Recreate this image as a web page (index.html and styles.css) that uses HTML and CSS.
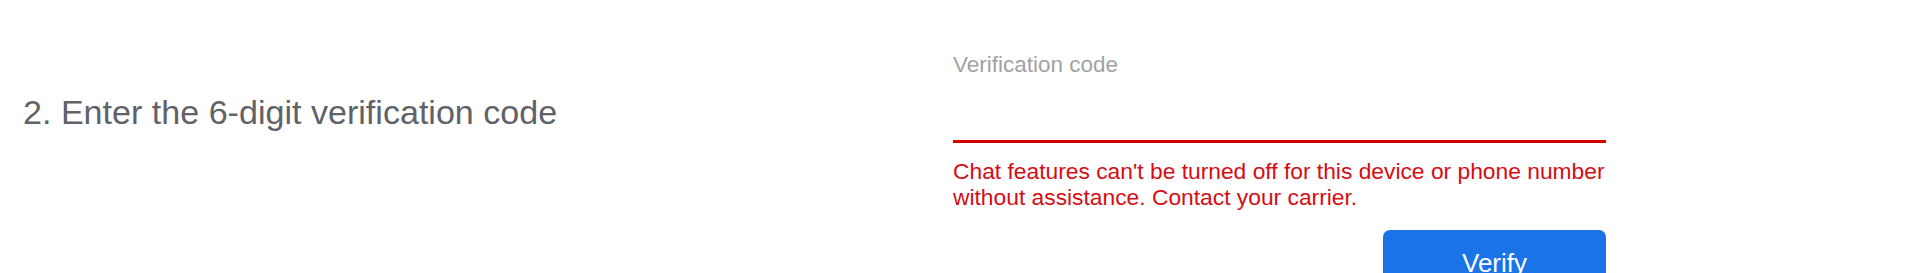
FILE: index.html
```html
<!DOCTYPE html>
<html lang="en">
<head>
<meta charset="utf-8">
<title>Verify</title>
<link rel="stylesheet" href="styles.css">
</head>
<body>
<main class="step">
  <h2 class="step-title">2. Enter the 6-digit verification code</h2>
  <form class="code-form">
    <label class="code-label" for="code">Verification code</label>
    <input class="code-input" id="code" type="text" inputmode="numeric" autocomplete="off">
    <p class="code-error">Chat features can't be turned off for this device or phone number without assistance. Contact your carrier.</p>
    <div class="actions">
      <button class="verify-btn" type="button">Verify</button>
    </div>
  </form>
</main>
</body>
</html>
```
FILE: styles.css
```css
html, body {
  margin: 0;
  padding: 0;
  background: #ffffff;
  font-family: "Liberation Sans", Arial, sans-serif;
  overflow: hidden;
}

.step {
  display: grid;
  grid-template-columns: 930px 653px;
  align-items: start;
  padding: 52px 0 0 23px;
}

.step-title {
  margin: 40px 0 0;
  font-size: 34.1px;
  line-height: 40px;
  font-weight: 400;
  color: #5f6368;
}

.code-form {
  display: flex;
  flex-direction: column;
  margin: 0;
}

.code-label {
  font-size: 22.5px;
  line-height: 26px;
  color: #a2a2a2;
}

.code-input {
  box-sizing: border-box;
  height: 65px;
  margin: 0;
  padding: 0;
  border: none;
  border-bottom: 3px solid #d50000;
  background: transparent;
  outline: none;
  font: inherit;
  font-size: 24px;
}

.code-error {
  margin: 15px 0 0;
  font-size: 22.8px;
  line-height: 26px;
  color: #d50d14;
}

.actions {
  display: flex;
  justify-content: flex-end;
  margin-top: 20px;
}

.verify-btn {
  width: 223px;
  height: 66px;
  padding: 18px 0;
  border: none;
  border-radius: 7px;
  background: #1a73e8;
  color: #ffffff;
  font-family: "Liberation Sans", Arial, sans-serif;
  font-size: 26px;
  line-height: 30px;
  display: flex;
  justify-content: center;
  align-items: flex-start;
}
```
